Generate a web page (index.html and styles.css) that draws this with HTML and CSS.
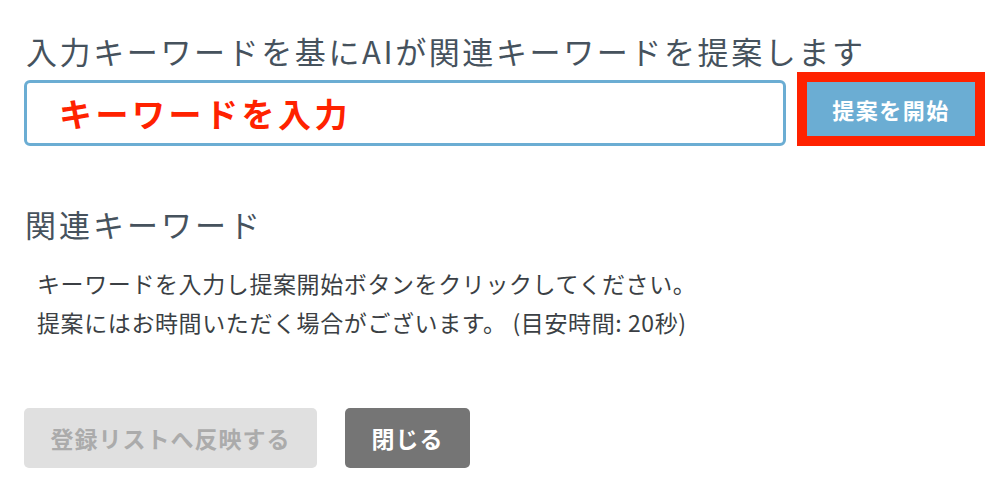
FILE: index.html
```html
<!DOCTYPE html>
<html lang="ja">
<head>
    <meta charset="UTF-8">
    <meta name="viewport" content="width=device-width, initial-scale=1.0">
    <title>関連キーワード提案</title>
    <link rel="stylesheet" href="styles.css">
</head>
<body>

    <!-- Suggest dialog -->
    <div class="modal">
        <h1 class="modal-title">入力キーワードを基にAIが関連キーワードを提案します</h1>

        <div class="search-row">
            <input type="text" class="keyword-input" placeholder="キーワードを入力">
            <button class="btn-start">提案を開始</button>
        </div>

        <h2 class="section-title">関連キーワード</h2>
        <p class="hint">
            キーワードを入力し提案開始ボタンをクリックしてください。<br>
            提案にはお時間いただく場合がございます。 (目安時間: 20秒)
        </p>

        <div class="actions">
            <button class="btn-apply" disabled>登録リストへ反映する</button>
            <button class="btn-close">閉じる</button>
        </div>
    </div>

</body>
</html>
```

FILE: styles.css
```css
body {
    font-family: "Noto Sans CJK JP", "Noto Sans", sans-serif;
    margin: 0;
    padding: 0;
    background-color: #ffffff;
    color: #333;
}

/* Dialog */
.modal {
    width: 1000px;
    height: 496px;
    box-sizing: border-box;
    padding: 31px 0 0 24px;
}
.modal-title {
    font-size: 31px;
    font-weight: normal;
    letter-spacing: 2.6px;
    line-height: 40px;
    color: #46525d;
    margin: 0 0 9px 2px;
}

/* Keyword input + start button */
.search-row {
    display: flex;
    align-items: flex-start;
}
.keyword-input {
    width: 762px;
    height: 66px;
    box-sizing: border-box;
    border: 3px solid #6badd3;
    border-radius: 6px;
    padding: 0 0 0 32px;
    font-family: inherit;
    font-size: 33px;
    font-weight: bold;
    letter-spacing: 3.5px;
    outline: none;
}
.keyword-input::placeholder {
    color: #ff2200;
    opacity: 1;
}
.btn-start {
    width: 168px;
    height: 54px;
    margin: 2px 0 0 21px;
    background-color: #6badd3;
    color: #ffffff;
    border: none;
    outline: 10px solid #ff2200;
    font-family: inherit;
    font-size: 22px;
    font-weight: bold;
    letter-spacing: 1.5px;
    padding-right: 6px;
    cursor: pointer;
}

/* Related keywords */
.section-title {
    font-size: 31px;
    font-weight: normal;
    letter-spacing: 3px;
    line-height: 40px;
    color: #46525d;
    margin: 58px 0 0 1px;
}
.hint {
    font-size: 23px;
    line-height: 39px;
    color: #3b3f44;
    margin: 20px 0 0 13px;
    letter-spacing: 0.6px;
}

/* Footer buttons */
.actions {
    display: flex;
    gap: 28px;
    margin-top: 66px;
}
.actions button {
    height: 60px;
    border: none;
    border-radius: 5px;
    font-family: inherit;
    font-size: 23px;
    font-weight: bold;
    letter-spacing: 1px;
}
.btn-apply {
    width: 293px;
    background-color: #e0e0e0;
    color: #ababab;
}
.btn-close {
    width: 125px;
    background-color: #757575;
    color: #ffffff;
    cursor: pointer;
}
```
